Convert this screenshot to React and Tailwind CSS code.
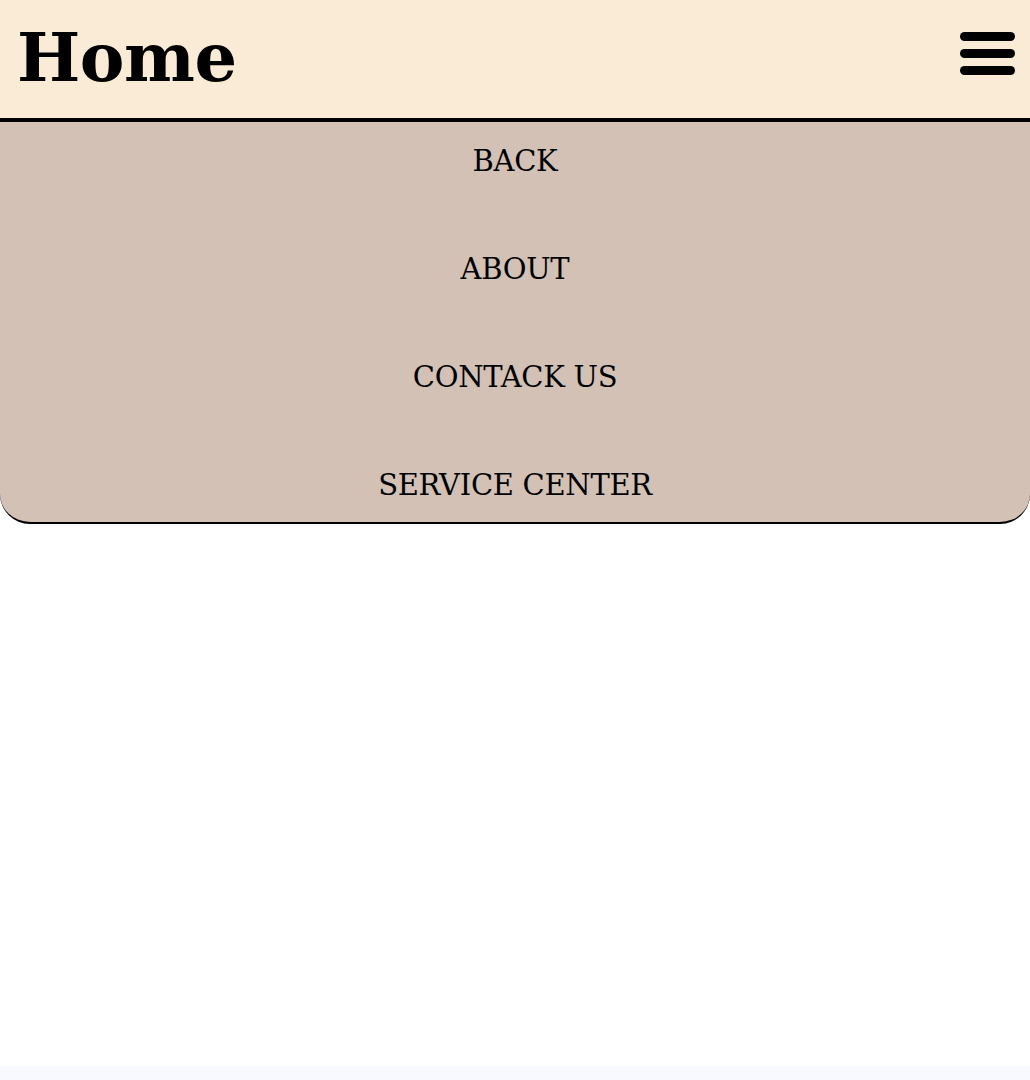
const links = ['BACK', 'ABOUT', 'CONTACK US', 'SERVICE CENTER']

export default function App() {
  return (
    <div className="min-h-screen flex flex-col bg-white font-['DejaVu_Serif',serif] text-black">
      <header className="h-[122px] bg-[#faebd7] border-b-4 border-black flex items-center justify-between pl-[17px] pr-[15px]">
        <h1 className="text-[67px] font-bold leading-none -mt-[3px] tracking-[-0.5px]">Home</h1>
        <button className="flex flex-col gap-[8px] -mt-[12px]" aria-label="menu">
          <span className="block w-[55px] h-[9px] rounded-full bg-black" />
          <span className="block w-[55px] h-[9px] rounded-full bg-black" />
          <span className="block w-[55px] h-[9px] rounded-full bg-black" />
        </button>
      </header>

      <nav className="bg-[#d3c1b6] border-b-2 border-black rounded-b-[30px] flex flex-col items-center gap-[68px] pt-[19px] pb-[17px]">
        {links.map((l) => (
          <a key={l} href="#" className="text-[29px] leading-[40px] tracking-[-0.3px]">
            {l}
          </a>
        ))}
      </nav>

      <div className="flex-1" />
      <div className="h-[14px] bg-[#f8f9fe]" />
    </div>
  )
}
